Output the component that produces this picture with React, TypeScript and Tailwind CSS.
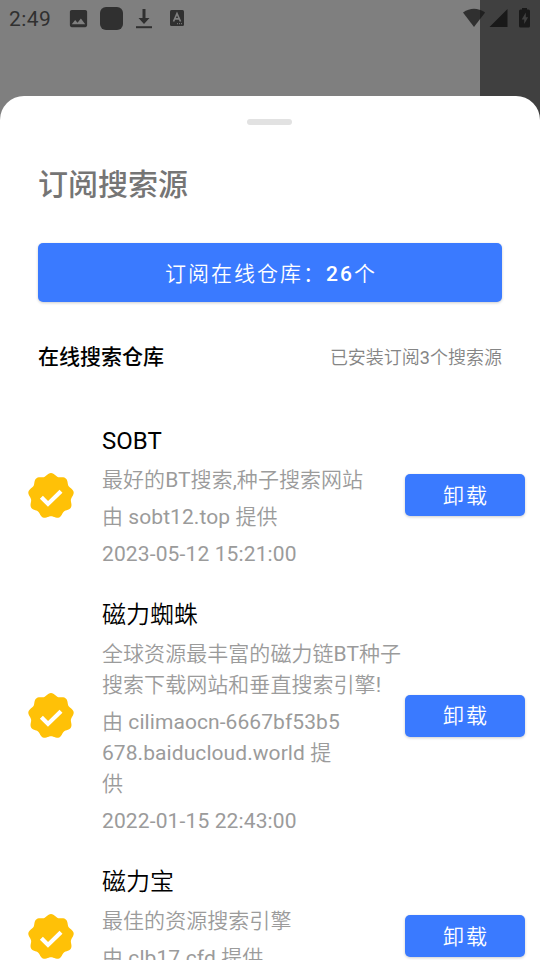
import { MdImage } from 'react-icons/md';

type Source = {
  name: string;
  description: string;
  provider: string;
  updated: string;
};

const sources: Source[] = [
  {
    name: 'SOBT',
    description: '最好的BT搜索,种子搜索网站',
    provider: '由 sobt12.top 提供',
    updated: '2023-05-12 15:21:00',
  },
  {
    name: '磁力蜘蛛',
    description: '全球资源最丰富的磁力链BT种子搜索下载网站和垂直搜索引擎!',
    provider: '由 cilimaocn-6667bf53b5678.baiducloud.world 提供',
    updated: '2022-01-15 22:43:00',
  },
  {
    name: '磁力宝',
    description: '最佳的资源搜索引擎',
    provider: '由 clb17.cfd 提供',
    updated: '2022-01-15 22:43:00',
  },
];

// Nine-lobed seal outline, sampled every three degrees around the centre.
const sealPoints = Array.from({ length: 120 }, (_, i) => {
  const angle = (i * 3 * Math.PI) / 180;
  const r = 21.6 + 1.4 * Math.cos(9 * angle);
  return `${(24 + r * Math.sin(angle)).toFixed(2)},${(24 - r * Math.cos(angle)).toFixed(2)}`;
}).join(' ');

function VerifiedBadge() {
  return (
    <svg width="48" height="48" viewBox="0 0 48 48" className="mb-[2px] shrink-0">
      <polygon points={sealPoints} fill="#ffc107" />
      <path d="M14.4 25.200 L21 31.900 L34 19.200" fill="none" stroke="#fff" strokeWidth="4.200" />
    </svg>
  );
}

function StatusBar() {
  return (
    <div className="flex h-9 items-center pl-[9px] pr-[9px] text-[#303030]">
      <span className="w-[58px] pt-px text-[21px] leading-9 tracking-[0.4px]">2:49</span>
      <MdImage className="size-[23px]" />
      <div className="ml-[10px] size-[23px] rounded-[6px] bg-[#303030]" />
      <svg width="18" height="22" viewBox="0 0 18 22" className="ml-[12px] mt-[2px]" fill="currentColor">
        <path d="M7.5 1h3v9h4L9 16 3.500 10h4z" />
        <path d="M1 18.200h16v2H1z" />
      </svg>
      <svg width="16" height="18" viewBox="0 0 16 18" className="ml-[16px]">
        <rect x="1" y="1" width="14" height="16" rx="1.500" fill="#303030" />
        <path d="M4.500 12.500 8 4.500l3.500 8M5.700 9.800h4.600" fill="none" stroke="#7f7f7f" strokeWidth="1.700" />
        <path d="M8 14.700h6" stroke="#7f7f7f" strokeWidth="1" strokeDasharray="1 1" />
      </svg>
      <svg width="24" height="20" viewBox="0 0 24 20" className="ml-auto">
        <path d="M1 4.500Q12-3 23 4.500L12 19z" fill="#303030" />
        <path d="M18 1.900Q21 3 23 4.500L18 11.100z" fill="#202020" />
      </svg>
      <svg width="20" height="20" viewBox="0 0 20 20" className="ml-[3px]">
        <path d="M.5 19 18.500 1v18z" fill="#191919" />
      </svg>
      <svg width="13" height="22" viewBox="0 0 13 22" className="ml-[9px]">
        <path d="M4 1h5v1.500h1.500Q12 2.500 12 4v15q0 1.500-1.500 1.500h-8Q1 20.500 1 19V4q0-1.500 1.500-1.500H4z" fill="#191919" />
        <path d="M7.800 5.500 3.700 12.500h2.500V17l3.900-6.800H7.800z" fill="#404040" />
      </svg>
    </div>
  );
}

function SourceRow({ source }: { source: Source }) {
  return (
    <li className="flex items-center pl-[27px] pr-[15px]">
      <VerifiedBadge />
      <div className="ml-[27px] flex w-[303px] shrink-0 flex-col gap-[6px] text-[21px] leading-[31px] text-[#9b9b9b]">
        <h3 className="text-[24px] leading-[36px] text-black">{source.name}</h3>
        <p className="break-all tracking-[0.05px]">{source.description}</p>
        <p className="w-[242px] break-all tracking-[0.07px]">{source.provider}</p>
        <p className="tracking-[0.13px]">{source.updated}</p>
      </div>
      <button className="mb-[3px] h-[42px] w-[120px] shrink-0 rounded-[5px] bg-[#3a7aff] pl-[2px] pt-[3px] text-[21px] tracking-[1.9px] text-white shadow-[0_1px_3px_rgba(0,0,0,0.2)]">
        卸载
      </button>
    </li>
  );
}

export default function App() {
  return (
    <div className="flex h-[960px] w-[540px] flex-col overflow-hidden bg-[linear-gradient(to_right,#7f7f7f_480px,#404040_480px)] font-[Roboto,'Noto_Sans_CJK_SC_DemiLight','Noto_Sans_CJK_SC',sans-serif]">
      <header className="h-24 shrink-0">
        <StatusBar />
      </header>
      <main className="flex min-h-0 flex-1 flex-col overflow-hidden rounded-t-[24px] bg-white">
        <div className="ml-[247px] mt-[23px] h-[6px] w-[45px] shrink-0 rounded-full bg-[#e2e2e2]" />
        <section className="flex shrink-0 flex-col px-[38px] pt-[38px]">
          <h1 className="font-[Roboto,'Noto_Sans_CJK_SC',sans-serif] text-[30px] font-medium leading-[44px] text-[#757575]">订阅搜索源</h1>
          <button className="mt-[36px] h-[59px] rounded-[5px] bg-[#3a7aff] pl-[2px] pt-[4px] text-[21px] font-medium tracking-[2px] text-white shadow-[0_1px_3px_rgba(0,0,0,0.2)]">
            <span className="font-normal">订阅在线仓库：</span>26<span className="font-normal">个</span>
          </button>
          <div className="mt-[40px] flex h-[31px] items-center justify-between">
            <h2 className="font-[Roboto,'Noto_Sans_CJK_SC',sans-serif] text-[21px] font-medium text-black">在线搜索仓库</h2>
            <span className="mb-px text-[18px] text-[#858585]">已安装订阅3个搜索源</span>
          </div>
        </section>
        <ul className="mt-[50px] flex shrink-0 flex-col gap-[27px]">
          {sources.map((source) => (
            <SourceRow key={source.name} source={source} />
          ))}
        </ul>
      </main>
    </div>
  );
}
